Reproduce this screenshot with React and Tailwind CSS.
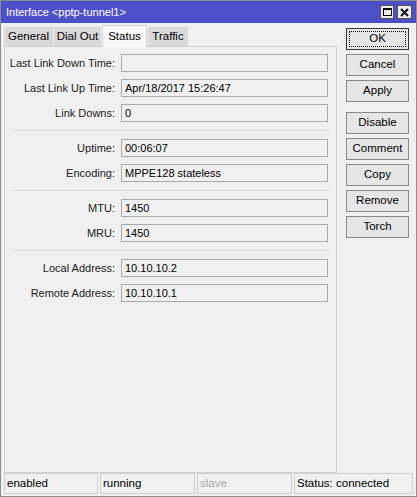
import React from 'react';

const font = { fontFamily: '"Liberation Sans", Arial, sans-serif' };

const groups = [
    [
        ['Last Link Down Time:', ''],
        ['Last Link Up Time:', 'Apr/18/2017 15:26:47'],
        ['Link Downs:', '0'],
    ],
    [
        ['Uptime:', '00:06:07'],
        ['Encoding:', 'MPPE128 stateless'],
    ],
    [
        ['MTU:', '1450'],
        ['MRU:', '1450'],
    ],
    [
        ['Local Address:', '10.10.10.2'],
        ['Remote Address:', '10.10.10.1'],
    ],
];

const Field = ({ label, value }) => (
    <div className="flex items-center h-[18px] mb-[7px] last:mb-0">
        <div className="w-[111px] text-right pr-[1px] text-[11px] text-[#1a1a1a] whitespace-nowrap">{label}</div>
        <div className="ml-[5px] w-[207px] h-[18px] border border-[#a9a9a9] bg-[#f0f0f0] pl-[3px] text-[11px] leading-[16px] text-black">
            {value}
        </div>
    </div>
);

const Btn = ({ children, focus }) => (
    <div className={`w-[63px] h-[22px] border border-[#8a8a8a] bg-[#e6e6e6] flex items-center justify-center text-[11.5px] text-black ${focus ? 'outline outline-1 outline-dotted outline-black outline-offset-[-4px] border-[#333]' : ''}`}>
        {children}
    </div>
);

export default function App() {
    return (
        <div style={font} className="w-[417px] h-[497px] bg-[#f0f0f0] border border-[#8c8c8c] flex flex-col overflow-hidden">
            {/* title bar */}
            <div className="h-[22px] bg-[#4e50c9] flex items-center pl-[5px] pr-[4px] shrink-0">
                <span className="text-white text-[11px]">Interface &lt;pptp-tunnel1&gt;</span>
                <div className="ml-auto flex gap-[3px]">
                    <div className="w-[14px] h-[14px] bg-[#ececec] border border-[#555] flex items-center justify-center">
                        <div className="w-[9px] h-[8px] border border-black border-t-2" />
                    </div>
                    <div className="w-[15px] h-[14px] bg-[#ececec] border border-[#555] flex items-center justify-center">
                        <svg width="9" height="9" viewBox="0 0 9 9">
                            <path d="M1 1 L8 8 M8 1 L1 8" stroke="#111" strokeWidth="2" />
                        </svg>
                    </div>
                </div>
            </div>

            <div className="flex flex-1 min-h-0">
                {/* left: tabs + panel */}
                <div className="ml-[3px] w-[333px] flex flex-col pt-[1px]">
                    <div className="flex items-end h-[22px] text-[11.5px] text-black">
                        <div className="w-[50px] h-[19px] bg-[#d9d9d9] border-r border-[#f0f0f0] flex items-center justify-center">General</div>
                        <div className="w-[48px] h-[19px] bg-[#d9d9d9] border-r border-[#f0f0f0] flex items-center justify-center">Dial Out</div>
                        <div className="w-[45px] h-[22px] bg-[#f9f9f9] border border-b-0 border-[#d0d0d0] -mb-[1px] relative flex items-center justify-center">Status</div>
                        <div className="w-[41px] h-[19px] bg-[#d9d9d9] border-l border-[#f0f0f0] flex items-center justify-center">Traffic</div>
                    </div>
                    <div className="h-[427px] border border-[#d0d0d0] bg-[#f0f0f0] pt-[7px]">
                        {groups.map((g, i) => (
                            <div key={i}>
                                {i > 0 && <div className="ml-[8px] mr-[7px] my-[8px] border-t border-[#d7d7d7]" />}
                                {g.map(([l, v]) => (
                                    <Field key={l} label={l} value={v} />
                                ))}
                            </div>
                        ))}
                    </div>
                </div>

                {/* right: buttons */}
                <div className="ml-[9px] pt-[5px] flex flex-col gap-[4px]">
                    <Btn focus>OK</Btn>
                    <Btn>Cancel</Btn>
                    <Btn>Apply</Btn>
                    <div className="h-[2px]" />
                    <Btn>Disable</Btn>
                    <Btn>Comment</Btn>
                    <Btn>Copy</Btn>
                    <Btn>Remove</Btn>
                    <Btn>Torch</Btn>
                </div>
            </div>

            {/* status bar */}
            <div className="h-[21px] mb-[2px] mx-[3px] flex gap-[2px] text-[11.5px] shrink-0">
                <div className="w-[94px] border border-[#d0d0d0] pl-[2px] leading-[19px] text-black">enabled</div>
                <div className="w-[95px] border border-[#d0d0d0] pl-[2px] leading-[19px] text-black">running</div>
                <div className="w-[95px] border border-[#d0d0d0] pl-[2px] leading-[19px] text-[#a8a8a8]">slave</div>
                <div className="flex-1 border border-[#d0d0d0] pl-[2px] leading-[19px] text-black">Status: connected</div>
            </div>
        </div>
    );
}
